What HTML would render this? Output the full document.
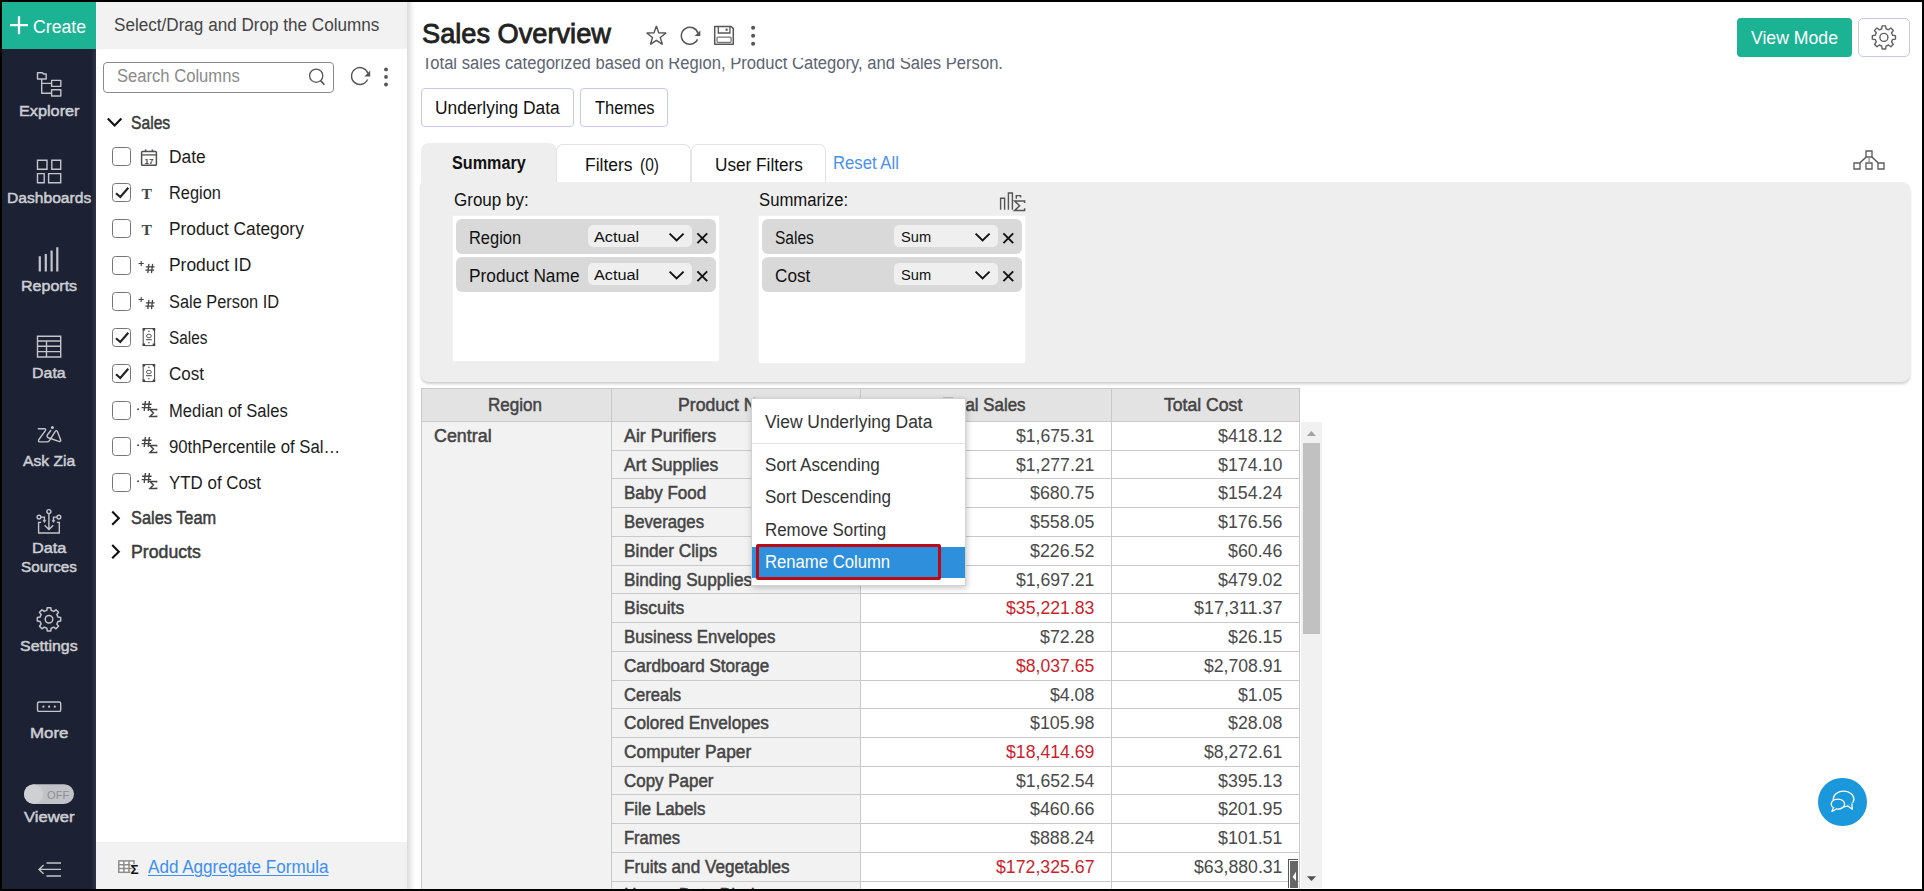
<!DOCTYPE html>
<html lang="en"><head><meta charset="utf-8"><title>Sales Overview</title><style>
html,body{margin:0;padding:0;}
body{width:1924px;height:891px;overflow:hidden;position:relative;background:#fff;font-family:'Liberation Sans',sans-serif;}
div,svg,span.t{position:absolute;}
span.t{white-space:pre;line-height:1;transform-origin:0 50%;}
</style></head>
<body>
<nav><div style="left:2px;top:2px;width:94px;height:887px;background:linear-gradient(to right,#1c2133 0,#1c2133 89px,#2e3547 94px);"></div>
<div style="left:2px;top:2px;width:94px;height:47px;background:#1bb394;"></div>
<svg style="left:2px;top:2px;" width="94" height="47" viewBox="0 0 94 47" fill="none"><path d="M8 23.1H26M17 14.2V32.2" stroke="#fff" stroke-width="2.3"/></svg>
<svg style="left:0;top:0;" width="1924" height="891" viewBox="0 0 1924 891" fill="none"><path d="M37.5 72.8H42.5L43.5 74H46.2V79H37.5Z M51.6 80.4H60.8V86.4H51.6Z M51.6 89.8H60.8V96H51.6Z M41.7 79V93.2H51.6 M41.7 83.4H51.6" stroke="#c4c5cb" stroke-width="1.4" stroke-linejoin="round"/><path d="M37.5 160.2H47V169.2H37.5Z M51.8 160.2H60.7V169.2H51.8Z M37.5 173.6H44.2V182.8H37.5Z M48.6 173.6H60.7V182.8H48.6Z" stroke="#c4c5cb" stroke-width="1.4"/><path d="M39.8 271.5V256.3 M45.8 271.5V254 M51.6 271.5V250.6 M57.3 271.5V247.2" stroke="#c4c5cb" stroke-width="2.2"/><path d="M37.5 336.2H60.7V357H37.5Z M37.5 341H60.7 M37.5 346.2H60.7 M37.5 351.6H60.7 M46.5 341V357" stroke="#c4c5cb" stroke-width="1.4"/><path d="M38.3 428.7H44.2Q46.6 428.7 45.2 430.9L38.9 439.5Q37.6 441.9 40.3 441.9H46.8Q48.6 441.9 49.6 440.3L55.1 431.6Q56.6 429.5 57.6 432L60.5 439.5Q61.4 442.2 58.8 441.3L49 438Q46.2 437 47.5 434.7L50.8 430.5" stroke="#c4c5cb" stroke-width="1.4" stroke-linecap="round" stroke-linejoin="round"/><circle cx="52.4" cy="427.4" r="1.5" fill="#c4c5cb"/><circle cx="48.9" cy="511.6" r="2" stroke="#c4c5cb" stroke-width="1.4"/><circle cx="39" cy="517.1" r="1.9" stroke="#c4c5cb" stroke-width="1.4"/><circle cx="58.9" cy="517.1" r="1.9" stroke="#c4c5cb" stroke-width="1.4"/><path d="M48.9 513.8V529.4 M44.6 525.2L48.9 529.5L53.3 525.2 M41 517.1H44.4V521 M56.9 517.1H53.5V521 M41.2 522.4H38.6V533H59.3V522.4H56.8" stroke="#c4c5cb" stroke-width="1.4"/><path d="M43 520.4L44.4 522.6L45.8 520.4Z M52.1 520.4L53.5 522.6L54.9 520.4Z" fill="#c4c5cb" stroke="#c4c5cb" stroke-width="0.6"/><path d="M46.81 610.36 L47.24 607.63 L50.76 607.63 L51.19 610.36 L53.77 611.43 L56.00 609.80 L58.50 612.30 L56.87 614.53 L57.94 617.11 L60.67 617.54 L60.67 621.06 L57.94 621.49 L56.87 624.07 L58.50 626.30 L56.00 628.80 L53.77 627.17 L51.19 628.24 L50.76 630.97 L47.24 630.97 L46.81 628.24 L44.23 627.17 L42.00 628.80 L39.50 626.30 L41.13 624.07 L40.06 621.49 L37.33 621.06 L37.33 617.54 L40.06 617.11 L41.13 614.53 L39.50 612.30 L42.00 609.80 L44.23 611.43Z" stroke="#c4c5cb" stroke-width="1.5" stroke-linejoin="round"/><circle cx="49" cy="619.3" r="3.8" stroke="#c4c5cb" stroke-width="1.5"/><rect x="37.5" y="702" width="23.2" height="9.4" rx="1.5" stroke="#c4c5cb" stroke-width="1.4"/><circle cx="43.4" cy="706.7" r="1.1" fill="#c4c5cb"/><circle cx="49.1" cy="706.7" r="1.1" fill="#c4c5cb"/><circle cx="54.8" cy="706.7" r="1.1" fill="#c4c5cb"/><rect x="24" y="784.2" width="50" height="19.8" rx="9.9" fill="#c2c3c8"/><circle cx="33.6" cy="794.1" r="9.6" fill="#cfd0d4"/><path d="M46.5 863H61 M39 869.4H61 M46.5 876H61 M43.6 865L39 869.4L43.6 873.8" stroke="#c4c5cb" stroke-width="1.4"/></svg>
<span class="t" style="left:32.80px;top:19px;font-size:17.6px;color:#fff;transform:scaleX(1.0036);">Create</span>
<span class="t" style="left:18.65px;top:103px;font-size:15.4px;color:#cdced3;transform:scaleX(1.0556);-webkit-text-stroke:0.5px #cdced3;">Explorer</span>
<span class="t" style="left:6.90px;top:190px;font-size:15.4px;color:#cdced3;transform:scaleX(1.0145);-webkit-text-stroke:0.5px #cdced3;">Dashboards</span>
<span class="t" style="left:20.95px;top:278px;font-size:15.4px;color:#cdced3;transform:scaleX(1.0410);-webkit-text-stroke:0.5px #cdced3;">Reports</span>
<span class="t" style="left:32.15px;top:365px;font-size:15.4px;color:#cdced3;transform:scaleX(1.0364);-webkit-text-stroke:0.5px #cdced3;">Data</span>
<span class="t" style="left:22.65px;top:453px;font-size:15.4px;color:#cdced3;transform:scaleX(1.0153);-webkit-text-stroke:0.5px #cdced3;">Ask Zia</span>
<span class="t" style="left:31.80px;top:540px;font-size:15.4px;color:#cdced3;transform:scaleX(1.0580);-webkit-text-stroke:0.5px #cdced3;">Data</span>
<span class="t" style="left:20.80px;top:559px;font-size:15.4px;color:#cdced3;transform:scaleX(0.9917);-webkit-text-stroke:0.5px #cdced3;">Sources</span>
<span class="t" style="left:20.05px;top:638px;font-size:15.4px;color:#cdced3;transform:scaleX(1.0373);-webkit-text-stroke:0.5px #cdced3;">Settings</span>
<span class="t" style="left:29.65px;top:725px;font-size:15.4px;color:#cdced3;transform:scaleX(1.0976);-webkit-text-stroke:0.5px #cdced3;">More</span>
<span class="t" style="left:23.65px;top:809px;font-size:15.4px;color:#cdced3;transform:scaleX(1.0799);-webkit-text-stroke:0.5px #cdced3;">Viewer</span>
<span class="t" style="left:46.50px;top:790px;font-size:11.5px;color:#8d8e93;transform:scaleX(0.9652);">OFF</span></nav>
<aside><div style="left:96px;top:2px;width:311px;height:887px;background:#fff;"></div>
<div style="left:96px;top:2px;width:311px;height:47px;background:#f2f2f2;"></div>
<div style="left:103px;top:62px;width:231px;height:31px;border:1px solid #8a8a8a;border-radius:4px;box-sizing:border-box;background:#fff;"></div>
<div style="left:96px;top:842px;width:311px;height:47px;background:#f2f2f2;"></div>
<svg style="left:0;top:0;" width="1924" height="891" viewBox="0 0 1924 891" fill="none"><circle cx="316.2" cy="75.7" r="6.6" stroke="#555" stroke-width="1.3"/><path d="M320.6 80.6L324.4 84.8" stroke="#555" stroke-width="1.6"/><path d="M367.6 79.5A8.4 8.4 0 1 1 368 73.6" stroke="#555" stroke-width="1.4"/><path d="M370.2 70.4V76.4H364.4Z" fill="#555"/><circle cx="386" cy="69.4" r="1.9" fill="#555"/><circle cx="386" cy="76.9" r="1.9" fill="#555"/><circle cx="386" cy="84.5" r="1.9" fill="#555"/><path d="M107.8 118.6L114.6 125.6L121.4 118.6" stroke="#111" stroke-width="2.1"/><path d="M112.2 511.6L118.8 518.2L112.2 524.8" stroke="#111" stroke-width="2.1"/><path d="M112.2 545.1L118.8 551.7L112.2 558.3" stroke="#111" stroke-width="2.1"/><rect x="112.5" y="147.5" width="18" height="18" rx="3" fill="#fff" stroke="#767676"/><rect x="112.5" y="183.5" width="18" height="18" rx="3" fill="#fff" stroke="#767676"/><path d="M116 193.2L120.3 197L128.3 187.8" stroke="#222" stroke-width="2.1"/><rect x="112.5" y="219.5" width="18" height="18" rx="3" fill="#fff" stroke="#767676"/><rect x="112.5" y="256.5" width="18" height="18" rx="3" fill="#fff" stroke="#767676"/><rect x="112.5" y="292.5" width="18" height="18" rx="3" fill="#fff" stroke="#767676"/><rect x="112.5" y="328.5" width="18" height="18" rx="3" fill="#fff" stroke="#767676"/><path d="M116 338.2L120.3 342L128.3 332.8" stroke="#222" stroke-width="2.1"/><rect x="112.5" y="364.5" width="18" height="18" rx="3" fill="#fff" stroke="#767676"/><path d="M116 374.2L120.3 378L128.3 368.8" stroke="#222" stroke-width="2.1"/><rect x="112.5" y="401.5" width="18" height="18" rx="3" fill="#fff" stroke="#767676"/><rect x="112.5" y="437.5" width="18" height="18" rx="3" fill="#fff" stroke="#767676"/><rect x="112.5" y="473.5" width="18" height="18" rx="3" fill="#fff" stroke="#767676"/><rect x="141.6" y="151.6" width="14.8" height="13.6" rx="0.8" stroke="#505050" stroke-width="1.5"/><path d="M141.6 154.9H156.4" stroke="#505050" stroke-width="1.3"/><path d="M145.6 149.4V151.6 M152.4 149.4V151.6" stroke="#505050" stroke-width="1.7"/><text x="149" y="163.5" font-family="Liberation Sans, sans-serif" font-weight="700" font-size="8" fill="#444" text-anchor="middle">17</text><text x="141.6" y="198.9" font-family="Liberation Serif, serif" font-weight="700" font-size="15.6" fill="#444">T</text><text x="141.6" y="235.16" font-family="Liberation Serif, serif" font-weight="700" font-size="15.6" fill="#444">T</text><path d="M138.6 263.5H143.8 M141.2 260.9V266.1" stroke="#444" stroke-width="1.1"/><path d="M148.90 263.9L147.79 273.09999999999997 M152.58 263.9L151.47 273.09999999999997 M145.86 266.94H154.60 M145.40 270.16H154.14" stroke="#444" stroke-width="1.3"/><path d="M138.6 299.5H143.8 M141.2 296.9V302.1" stroke="#444" stroke-width="1.1"/><path d="M148.90 299.9L147.79 309.09999999999997 M152.58 299.9L151.47 309.09999999999997 M145.86 302.94H154.60 M145.40 306.16H154.14" stroke="#444" stroke-width="1.3"/><rect x="143.2" y="328.6" width="11.4" height="17" rx="0.6" stroke="#444" stroke-width="1"/><ellipse cx="148.9" cy="336.0" rx="2.4" ry="1.8" stroke="#444" stroke-width="0.9"/><path d="M146 339.7H151.8" stroke="#444" stroke-width="1"/><circle cx="148.9" cy="331.3" r="0.7" fill="#444"/><circle cx="148.9" cy="342.8" r="0.7" fill="#444"/><path d="M142.6 328.1h2.5v2.5h-2.5Z M152.7 328.1h2.5v2.5h-2.5Z M142.6 343.6h2.5v2.5h-2.5Z M152.7 343.6h2.5v2.5h-2.5Z" fill="#444"/><rect x="143.2" y="364.6" width="11.4" height="17" rx="0.6" stroke="#444" stroke-width="1"/><ellipse cx="148.9" cy="372.0" rx="2.4" ry="1.8" stroke="#444" stroke-width="0.9"/><path d="M146 375.7H151.8" stroke="#444" stroke-width="1"/><circle cx="148.9" cy="367.3" r="0.7" fill="#444"/><circle cx="148.9" cy="378.8" r="0.7" fill="#444"/><path d="M142.6 364.1h2.5v2.5h-2.5Z M152.7 364.1h2.5v2.5h-2.5Z M142.6 379.6h2.5v2.5h-2.5Z M152.7 379.6h2.5v2.5h-2.5Z" fill="#444"/><circle cx="138.1" cy="409.2" r="1" fill="#444"/><path d="M145.40 401L144.20 410.8 M149.40 401L148.20 410.8 M142.10 404.23H151.60 M141.60 407.66H151.10" stroke="#444" stroke-width="1.4"/><path d="M156.6 410.4V409.4H150L153.4 413.0L150 416.5H156.6V415.5" stroke="#444" stroke-width="1.5"/><circle cx="138.1" cy="445.2" r="1" fill="#444"/><path d="M145.40 437L144.20 446.8 M149.40 437L148.20 446.8 M142.10 440.23H151.60 M141.60 443.66H151.10" stroke="#444" stroke-width="1.4"/><path d="M156.6 446.4V445.4H150L153.4 449.0L150 452.5H156.6V451.5" stroke="#444" stroke-width="1.5"/><circle cx="138.1" cy="481.2" r="1" fill="#444"/><path d="M145.40 473L144.20 482.8 M149.40 473L148.20 482.8 M142.10 476.23H151.60 M141.60 479.66H151.10" stroke="#444" stroke-width="1.4"/><path d="M156.6 482.4V481.4H150L153.4 485.0L150 488.5H156.6V487.5" stroke="#444" stroke-width="1.5"/><rect x="118.8" y="860.9" width="15.2" height="11.4" fill="#fff" stroke="#8c8c8c" stroke-width="1.5"/><path d="M118.8 864.7H134 M118.8 868.5H134 M123.9 860.9V872.3 M129 860.9V872.3" stroke="#8c8c8c" stroke-width="1.5"/><text x="130.6" y="873.8" font-family="Liberation Sans, sans-serif" font-weight="700" font-size="13.5" fill="#111" stroke="#f2f2f2" stroke-width="1.6" paint-order="stroke">Σ</text></svg>
<span class="t" style="left:113.50px;top:17px;font-size:17.6px;color:#444;transform:scaleX(0.9724);">Select/Drag and Drop the Columns</span>
<span class="t" style="left:117.30px;top:68px;font-size:17.6px;color:#8a8a8a;transform:scaleX(0.9434);">Search Columns</span>
<span class="t" style="left:131.00px;top:115px;font-size:17.6px;color:#3c3c3c;transform:scaleX(0.8906);-webkit-text-stroke:0.5px #3c3c3c;">Sales</span>
<span class="t" style="left:169.00px;top:149px;font-size:17.6px;color:#1c1c1c;transform:scaleX(0.9900);">Date</span>
<span class="t" style="left:169.00px;top:185px;font-size:17.6px;color:#1c1c1c;transform:scaleX(0.9307);">Region</span>
<span class="t" style="left:169.00px;top:221px;font-size:17.6px;color:#1c1c1c;transform:scaleX(0.9845);">Product Category</span>
<span class="t" style="left:169.00px;top:257px;font-size:17.6px;color:#1c1c1c;transform:scaleX(0.9901);">Product ID</span>
<span class="t" style="left:169.00px;top:294px;font-size:17.6px;color:#1c1c1c;transform:scaleX(0.9295);">Sale Person ID</span>
<span class="t" style="left:169.00px;top:330px;font-size:17.6px;color:#1c1c1c;transform:scaleX(0.8724);">Sales</span>
<span class="t" style="left:169.00px;top:366px;font-size:17.6px;color:#1c1c1c;transform:scaleX(0.9672);">Cost</span>
<span class="t" style="left:169.00px;top:403px;font-size:17.6px;color:#1c1c1c;transform:scaleX(0.9408);">Median of Sales</span>
<span class="t" style="left:169.00px;top:439px;font-size:17.6px;color:#1c1c1c;transform:scaleX(0.9514);">90thPercentile of Sal…</span>
<span class="t" style="left:169.00px;top:475px;font-size:17.6px;color:#1c1c1c;transform:scaleX(0.9602);">YTD of Cost</span>
<span class="t" style="left:131.00px;top:510px;font-size:17.6px;color:#3c3c3c;transform:scaleX(0.9301);-webkit-text-stroke:0.5px #3c3c3c;">Sales Team</span>
<span class="t" style="left:131.00px;top:544px;font-size:17.6px;color:#3c3c3c;transform:scaleX(1.0059);-webkit-text-stroke:0.5px #3c3c3c;">Products</span>
<span class="t" style="left:147.70px;top:859px;font-size:17.6px;color:#3f8ff2;transform:scaleX(0.9713);text-decoration:underline;text-decoration-thickness:1px;text-underline-offset:2px;">Add Aggregate Formula</span></aside>
<main><div style="left:407px;top:2px;width:1515px;height:887px;background:#fff linear-gradient(to right,#dadada 0,#e4e4e4 2px,#efefef 4px,#f9f9f9 6.5px,#fff 9px) no-repeat;background-size:10px 100%;"></div>
<div style="left:415px;top:58px;width:700px;height:30px;overflow:hidden;"><span class="t" style="left:7.30px;top:-3px;font-size:17.6px;color:#5d6472;transform:scaleX(0.9434);">Total sales categorized based on Region, Product Category, and Sales Person.</span></div>
<div style="left:421px;top:88px;width:153px;height:39px;border:1px solid #c3cbe8;border-radius:4px;box-sizing:border-box;background:#fff;"></div>
<div style="left:580px;top:88px;width:88px;height:39px;border:1px solid #c3cbe8;border-radius:4px;box-sizing:border-box;background:#fff;"></div>
<div style="left:1737px;top:18px;width:115px;height:39px;background:#1bb394;border-radius:4px;"></div>
<div style="left:1858px;top:18px;width:52px;height:39px;border:1px solid #c3cbe8;border-radius:4px;box-sizing:border-box;background:#fff;border-radius:5px;"></div>
<div style="left:421px;top:182px;width:1489px;height:200px;background:#eee;border-radius:0 8px 8px 8px;box-shadow:0 2px 3px rgba(0,0,0,.2);"></div>
<div style="left:421px;top:143px;width:135.5px;height:40px;background:#eee;border-radius:8px 8px 0 0;"></div>
<div style="left:556px;top:144px;width:135px;height:38px;background:#fff;border:1px solid #e4e4e4;border-bottom:none;border-radius:7px 7px 0 0;box-sizing:border-box;"></div>
<div style="left:691px;top:144px;width:135px;height:38px;background:#fff;border:1px solid #e4e4e4;border-bottom:none;border-radius:7px 7px 0 0;box-sizing:border-box;"></div>
<div style="left:452px;top:215px;width:268px;height:147px;background:#fff;border:1px solid #f1f1f1;box-sizing:border-box;"></div>
<div style="left:758px;top:215px;width:268px;height:148.5px;background:#fff;border:1px solid #f1f1f1;box-sizing:border-box;"></div>
<div style="left:456px;top:219.3px;width:260px;height:34.6px;background:#d9d9d9;border-radius:6px;"></div>
<div style="left:588px;top:225px;width:104px;height:22.3px;background:#efefef;border-radius:5px;"></div>
<svg style="left:668px;top:231.3px;" width="42" height="16" viewBox="0 0 42 16" fill="none"><path d="M1.6 2.6L8.6 9.4L15.6 2.6" stroke="#111" stroke-width="1.9"/><path d="M29.4 2.4L39.2 12.2M39.2 2.4L29.4 12.2" stroke="#111" stroke-width="1.9"/></svg>
<div style="left:456px;top:257.3px;width:260px;height:34.6px;background:#d9d9d9;border-radius:6px;"></div>
<div style="left:588px;top:263px;width:104px;height:22.3px;background:#efefef;border-radius:5px;"></div>
<svg style="left:668px;top:269.3px;" width="42" height="16" viewBox="0 0 42 16" fill="none"><path d="M1.6 2.6L8.6 9.4L15.6 2.6" stroke="#111" stroke-width="1.9"/><path d="M29.4 2.4L39.2 12.2M39.2 2.4L29.4 12.2" stroke="#111" stroke-width="1.9"/></svg>
<div style="left:762px;top:219.3px;width:260px;height:34.6px;background:#d9d9d9;border-radius:6px;"></div>
<div style="left:894px;top:225px;width:104px;height:22.3px;background:#efefef;border-radius:5px;"></div>
<svg style="left:974px;top:231.3px;" width="42" height="16" viewBox="0 0 42 16" fill="none"><path d="M1.6 2.6L8.6 9.4L15.6 2.6" stroke="#111" stroke-width="1.9"/><path d="M29.4 2.4L39.2 12.2M39.2 2.4L29.4 12.2" stroke="#111" stroke-width="1.9"/></svg>
<div style="left:762px;top:257.3px;width:260px;height:34.6px;background:#d9d9d9;border-radius:6px;"></div>
<div style="left:894px;top:263px;width:104px;height:22.3px;background:#efefef;border-radius:5px;"></div>
<svg style="left:974px;top:269.3px;" width="42" height="16" viewBox="0 0 42 16" fill="none"><path d="M1.6 2.6L8.6 9.4L15.6 2.6" stroke="#111" stroke-width="1.9"/><path d="M29.4 2.4L39.2 12.2M39.2 2.4L29.4 12.2" stroke="#111" stroke-width="1.9"/></svg>
<svg style="left:0;top:0;" width="1924" height="891" viewBox="0 0 1924 891" fill="none"><path d="M656.40 26.00 L658.81 32.88 L666.10 33.05 L660.30 37.47 L662.40 44.45 L656.40 40.30 L650.40 44.45 L652.50 37.47 L646.70 33.05 L653.99 32.88Z" stroke="#555" stroke-width="1.4" stroke-linejoin="miter" stroke-miterlimit="2"/><path d="M697.5 39.4A8.5 8.5 0 1 1 698 33.4" stroke="#555" stroke-width="1.5"/><path d="M700.3 30.4V36.1H694.6Z" fill="#555"/><path d="M714.7 26.5H731.2L733.3 28.6V44.3H714.7Z" stroke="#555" stroke-width="1.5" stroke-linejoin="round"/><path d="M718.3 26.5V33H729.9V26.5" stroke="#555" stroke-width="1.3"/><rect x="717" y="37.1" width="14.1" height="5.2" rx="1" stroke="#777" stroke-width="1.3"/><rect x="725.6" y="28.6" width="2" height="2.2" fill="#555"/><circle cx="753.1" cy="27.7" r="2" fill="#555"/><circle cx="753.1" cy="35.7" r="2" fill="#555"/><circle cx="753.1" cy="43.8" r="2" fill="#555"/><path d="M1881.78 28.76 L1882.15 25.83 L1885.65 25.83 L1886.02 28.76 L1888.52 29.79 L1890.84 27.98 L1893.32 30.46 L1891.51 32.78 L1892.54 35.28 L1895.47 35.65 L1895.47 39.15 L1892.54 39.52 L1891.51 42.02 L1893.32 44.34 L1890.84 46.82 L1888.52 45.01 L1886.02 46.04 L1885.65 48.97 L1882.15 48.97 L1881.78 46.04 L1879.28 45.01 L1876.96 46.82 L1874.48 44.34 L1876.29 42.02 L1875.26 39.52 L1872.33 39.15 L1872.33 35.65 L1875.26 35.28 L1876.29 32.78 L1874.48 30.46 L1876.96 27.98 L1879.28 29.79Z" stroke="#606060" stroke-width="1.4" stroke-linejoin="round"/><circle cx="1883.9" cy="37.4" r="4.0" stroke="#606060" stroke-width="1.4"/><path d="M1866 151H1872V157H1866Z M1854 163H1860V169H1854Z M1866 163H1872V169H1866Z M1878 163H1884V169H1878Z" stroke="#5c5c5c" stroke-width="1.35"/><path d="M1866.2 157L1860 162.8 M1871.9 157L1878 162.8" stroke="#585858" stroke-width="1.5"/><path d="M1869.05 157V162.6" stroke="#8a8a8a" stroke-width="1.3"/><path d="M1000.6 209.8V198.3H1004.6V209.8 M1008.4 209.8V193H1012.4V209.8 M1016.3 198.8V195.6H1020.6V197.4" stroke="#555" stroke-width="1.4"/><path d="M1024.6 203V200.9H1014.6L1019.6 205.8L1014.6 210.6H1024.6V208.2" stroke="#555" stroke-width="1.5" stroke-linejoin="miter"/></svg>
<span class="t" style="left:422.20px;top:20px;font-size:27.5px;color:#222;transform:scaleX(0.9888);-webkit-text-stroke:0.85px #222;">Sales Overview</span>
<span class="t" style="left:435.40px;top:100px;font-size:17.6px;color:#111;transform:scaleX(0.9885);">Underlying Data</span>
<span class="t" style="left:594.70px;top:100px;font-size:17.6px;color:#111;transform:scaleX(0.9377);">Themes</span>
<span class="t" style="left:1751.00px;top:30px;font-size:17.6px;color:#fff;transform:scaleX(1.0032);">View Mode</span>
<span class="t" style="left:451.60px;top:155px;font-size:17.6px;color:#111;transform:scaleX(0.9191);font-weight:700;">Summary</span>
<span class="t" style="left:585.00px;top:157px;font-size:17.6px;color:#111;transform:scaleX(0.9936);">Filters</span>
<span class="t" style="left:640.40px;top:157px;font-size:17.6px;color:#111;transform:scaleX(0.8784);">(0)</span>
<span class="t" style="left:714.60px;top:157px;font-size:17.6px;color:#111;transform:scaleX(0.9773);">User Filters</span>
<span class="t" style="left:833.30px;top:155px;font-size:17.6px;color:#4b8ff0;transform:scaleX(0.9491);">Reset All</span>
<span class="t" style="left:453.70px;top:192px;font-size:17.6px;color:#111;transform:scaleX(0.9668);">Group by:</span>
<span class="t" style="left:758.80px;top:192px;font-size:17.6px;color:#111;transform:scaleX(0.9493);">Summarize:</span>
<span class="t" style="left:469.00px;top:230px;font-size:17.6px;color:#111;transform:scaleX(0.9343);">Region</span>
<span class="t" style="left:468.50px;top:268px;font-size:17.6px;color:#111;transform:scaleX(0.9826);">Product Name</span>
<span class="t" style="left:774.80px;top:230px;font-size:17.6px;color:#111;transform:scaleX(0.8838);">Sales</span>
<span class="t" style="left:774.80px;top:268px;font-size:17.6px;color:#111;transform:scaleX(0.9755);">Cost</span>
<span class="t" style="left:594.30px;top:229px;font-size:15.4px;color:#111;transform:scaleX(1.0565);">Actual</span>
<span class="t" style="left:594.30px;top:267px;font-size:15.4px;color:#111;transform:scaleX(1.0565);">Actual</span>
<span class="t" style="left:900.60px;top:229px;font-size:15.4px;color:#111;transform:scaleX(0.9508);">Sum</span>
<span class="t" style="left:900.60px;top:267px;font-size:15.4px;color:#111;transform:scaleX(0.9508);">Sum</span></main>
<section><div style="left:421px;top:388px;width:879px;height:34px;background:#e3e3e3;"></div>
<div style="left:421px;top:422px;width:440px;height:467px;background:#f2f2f2;"></div>
<div style="left:421px;top:388px;width:879px;height:1px;background:#c9c9c9;"></div>
<div style="left:421px;top:421px;width:879px;height:1px;background:#c9c9c9;"></div>
<div style="left:611px;top:450px;width:689px;height:1px;background:#c9c9c9;"></div>
<div style="left:611px;top:478px;width:689px;height:1px;background:#c9c9c9;"></div>
<div style="left:611px;top:507px;width:689px;height:1px;background:#c9c9c9;"></div>
<div style="left:611px;top:536px;width:689px;height:1px;background:#c9c9c9;"></div>
<div style="left:611px;top:565px;width:689px;height:1px;background:#c9c9c9;"></div>
<div style="left:611px;top:593px;width:689px;height:1px;background:#c9c9c9;"></div>
<div style="left:611px;top:622px;width:689px;height:1px;background:#c9c9c9;"></div>
<div style="left:611px;top:651px;width:689px;height:1px;background:#c9c9c9;"></div>
<div style="left:611px;top:680px;width:689px;height:1px;background:#c9c9c9;"></div>
<div style="left:611px;top:708px;width:689px;height:1px;background:#c9c9c9;"></div>
<div style="left:611px;top:737px;width:689px;height:1px;background:#c9c9c9;"></div>
<div style="left:611px;top:766px;width:689px;height:1px;background:#c9c9c9;"></div>
<div style="left:611px;top:794px;width:689px;height:1px;background:#c9c9c9;"></div>
<div style="left:611px;top:823px;width:689px;height:1px;background:#c9c9c9;"></div>
<div style="left:611px;top:852px;width:689px;height:1px;background:#c9c9c9;"></div>
<div style="left:611px;top:881px;width:689px;height:1px;background:#c9c9c9;"></div>
<div style="left:421px;top:388px;width:1px;height:501px;background:#c9c9c9;"></div>
<div style="left:611px;top:388px;width:1px;height:501px;background:#c9c9c9;"></div>
<div style="left:860px;top:388px;width:1px;height:501px;background:#c9c9c9;"></div>
<div style="left:1111px;top:388px;width:1px;height:501px;background:#c9c9c9;"></div>
<div style="left:1299px;top:388px;width:1px;height:501px;background:#c9c9c9;"></div>
<div style="left:1301px;top:422px;width:21px;height:466px;background:#f1f1f1;"></div>
<div style="left:1303px;top:443px;width:17px;height:191px;background:#c1c1c1;"></div>
<svg style="left:1301px;top:422px;" width="21" height="466" viewBox="0 0 21 466" fill="none"><path d="M5.9 14L10.4 9L15 14Z" fill="#a3a3a3"/><path d="M5.9 454.2L10.5 459L15.1 454.2Z" fill="#505050"/></svg>
<div style="left:1288px;top:859px;width:10px;height:29px;border-left:1px solid #555;border-top:1px solid #555;background:#fff;box-sizing:border-box;"></div>
<div style="left:1290px;top:861px;width:8px;height:27px;background:#666;"></div>
<svg style="left:1288px;top:859px;" width="10" height="29" viewBox="0 0 10 29" fill="none"><path d="M8 12.8L4.6 17.9L8 22Z" fill="#fff"/></svg>
<span class="t" style="left:487.84px;top:397px;font-size:17.6px;color:#444;transform:scaleX(0.9669);-webkit-text-stroke:0.5px #444;">Region</span>
<span class="t" style="left:678.22px;top:397px;font-size:17.6px;color:#444;transform:scaleX(1.0028);-webkit-text-stroke:0.5px #444;">Product Name</span>
<span class="t" style="left:942.97px;top:397px;font-size:17.6px;color:#444;transform:scaleX(0.9581);-webkit-text-stroke:0.5px #444;">Total Sales</span>
<span class="t" style="left:1163.84px;top:397px;font-size:17.6px;color:#444;transform:scaleX(1.0012);-webkit-text-stroke:0.5px #444;">Total Cost</span>
<span class="t" style="left:433.70px;top:428px;font-size:17.6px;color:#444;transform:scaleX(1.0155);-webkit-text-stroke:0.5px #444;">Central</span>
<span class="t" style="left:623.60px;top:428px;font-size:17.6px;color:#444;transform:scaleX(1.0132);-webkit-text-stroke:0.5px #444;">Air Purifiers</span>
<span class="t" style="left:1016.32px;top:428px;font-size:17.6px;color:#4a4a4a;transform:scaleX(1.0013);">$1,675.31</span>
<span class="t" style="left:1218.29px;top:428px;font-size:17.6px;color:#4a4a4a;transform:scaleX(1.0126);">$418.12</span>
<span class="t" style="left:623.60px;top:457px;font-size:17.6px;color:#444;transform:scaleX(0.9928);-webkit-text-stroke:0.5px #444;">Art Supplies</span>
<span class="t" style="left:1016.32px;top:457px;font-size:17.6px;color:#4a4a4a;transform:scaleX(1.0013);">$1,277.21</span>
<span class="t" style="left:1218.29px;top:457px;font-size:17.6px;color:#4a4a4a;transform:scaleX(1.0126);">$174.10</span>
<span class="t" style="left:623.60px;top:485px;font-size:17.6px;color:#444;transform:scaleX(0.9660);-webkit-text-stroke:0.5px #444;">Baby Food</span>
<span class="t" style="left:1030.29px;top:485px;font-size:17.6px;color:#4a4a4a;transform:scaleX(1.0126);">$680.75</span>
<span class="t" style="left:1218.29px;top:485px;font-size:17.6px;color:#4a4a4a;transform:scaleX(1.0126);">$154.24</span>
<span class="t" style="left:623.60px;top:514px;font-size:17.6px;color:#444;transform:scaleX(0.9517);-webkit-text-stroke:0.5px #444;">Beverages</span>
<span class="t" style="left:1030.29px;top:514px;font-size:17.6px;color:#4a4a4a;transform:scaleX(1.0126);">$558.05</span>
<span class="t" style="left:1218.29px;top:514px;font-size:17.6px;color:#4a4a4a;transform:scaleX(1.0126);">$176.56</span>
<span class="t" style="left:623.60px;top:543px;font-size:17.6px;color:#444;transform:scaleX(0.9829);-webkit-text-stroke:0.5px #444;">Binder Clips</span>
<span class="t" style="left:1030.29px;top:543px;font-size:17.6px;color:#4a4a4a;transform:scaleX(1.0126);">$226.52</span>
<span class="t" style="left:1228.34px;top:543px;font-size:17.6px;color:#4a4a4a;transform:scaleX(1.0102);">$60.46</span>
<span class="t" style="left:623.60px;top:572px;font-size:17.6px;color:#444;transform:scaleX(0.9774);-webkit-text-stroke:0.5px #444;">Binding Supplies</span>
<span class="t" style="left:1016.32px;top:572px;font-size:17.6px;color:#4a4a4a;transform:scaleX(1.0013);">$1,697.21</span>
<span class="t" style="left:1218.29px;top:572px;font-size:17.6px;color:#4a4a4a;transform:scaleX(1.0126);">$479.02</span>
<span class="t" style="left:623.60px;top:600px;font-size:17.6px;color:#444;transform:scaleX(0.9920);-webkit-text-stroke:0.5px #444;">Biscuits</span>
<span class="t" style="left:1006.25px;top:600px;font-size:17.6px;color:#cc1f2e;transform:scaleX(1.0044);">$35,221.83</span>
<span class="t" style="left:1194.25px;top:600px;font-size:17.6px;color:#4a4a4a;transform:scaleX(1.0196);">$17,311.37</span>
<span class="t" style="left:623.60px;top:629px;font-size:17.6px;color:#444;transform:scaleX(0.9549);-webkit-text-stroke:0.5px #444;">Business Envelopes</span>
<span class="t" style="left:1040.34px;top:629px;font-size:17.6px;color:#4a4a4a;transform:scaleX(1.0102);">$72.28</span>
<span class="t" style="left:1228.34px;top:629px;font-size:17.6px;color:#4a4a4a;transform:scaleX(1.0102);">$26.15</span>
<span class="t" style="left:623.60px;top:658px;font-size:17.6px;color:#444;transform:scaleX(0.9703);-webkit-text-stroke:0.5px #444;">Cardboard Storage</span>
<span class="t" style="left:1016.32px;top:658px;font-size:17.6px;color:#cc1f2e;transform:scaleX(1.0013);">$8,037.65</span>
<span class="t" style="left:1204.32px;top:658px;font-size:17.6px;color:#4a4a4a;transform:scaleX(1.0013);">$2,708.91</span>
<span class="t" style="left:623.60px;top:687px;font-size:17.6px;color:#444;transform:scaleX(0.9430);-webkit-text-stroke:0.5px #444;">Cereals</span>
<span class="t" style="left:1050.39px;top:687px;font-size:17.6px;color:#4a4a4a;transform:scaleX(1.0063);">$4.08</span>
<span class="t" style="left:1238.39px;top:687px;font-size:17.6px;color:#4a4a4a;transform:scaleX(1.0063);">$1.05</span>
<span class="t" style="left:623.60px;top:715px;font-size:17.6px;color:#444;transform:scaleX(0.9743);-webkit-text-stroke:0.5px #444;">Colored Envelopes</span>
<span class="t" style="left:1030.29px;top:715px;font-size:17.6px;color:#4a4a4a;transform:scaleX(1.0126);">$105.98</span>
<span class="t" style="left:1228.34px;top:715px;font-size:17.6px;color:#4a4a4a;transform:scaleX(1.0102);">$28.08</span>
<span class="t" style="left:623.60px;top:744px;font-size:17.6px;color:#444;transform:scaleX(0.9858);-webkit-text-stroke:0.5px #444;">Computer Paper</span>
<span class="t" style="left:1006.25px;top:744px;font-size:17.6px;color:#cc1f2e;transform:scaleX(1.0044);">$18,414.69</span>
<span class="t" style="left:1204.32px;top:744px;font-size:17.6px;color:#4a4a4a;transform:scaleX(1.0013);">$8,272.61</span>
<span class="t" style="left:623.60px;top:773px;font-size:17.6px;color:#444;transform:scaleX(0.9627);-webkit-text-stroke:0.5px #444;">Copy Paper</span>
<span class="t" style="left:1016.32px;top:773px;font-size:17.6px;color:#4a4a4a;transform:scaleX(1.0013);">$1,652.54</span>
<span class="t" style="left:1218.29px;top:773px;font-size:17.6px;color:#4a4a4a;transform:scaleX(1.0126);">$395.13</span>
<span class="t" style="left:623.60px;top:801px;font-size:17.6px;color:#444;transform:scaleX(0.9568);-webkit-text-stroke:0.5px #444;">File Labels</span>
<span class="t" style="left:1030.29px;top:801px;font-size:17.6px;color:#4a4a4a;transform:scaleX(1.0126);">$460.66</span>
<span class="t" style="left:1218.29px;top:801px;font-size:17.6px;color:#4a4a4a;transform:scaleX(1.0126);">$201.95</span>
<span class="t" style="left:623.60px;top:830px;font-size:17.6px;color:#444;transform:scaleX(0.9400);-webkit-text-stroke:0.5px #444;">Frames</span>
<span class="t" style="left:1030.29px;top:830px;font-size:17.6px;color:#4a4a4a;transform:scaleX(1.0126);">$888.24</span>
<span class="t" style="left:1218.29px;top:830px;font-size:17.6px;color:#4a4a4a;transform:scaleX(1.0126);">$101.51</span>
<span class="t" style="left:623.60px;top:859px;font-size:17.6px;color:#444;transform:scaleX(0.9735);-webkit-text-stroke:0.5px #444;">Fruits and Vegetables</span>
<span class="t" style="left:996.20px;top:859px;font-size:17.6px;color:#cc1f2e;transform:scaleX(1.0067);">$172,325.67</span>
<span class="t" style="left:1194.25px;top:859px;font-size:17.6px;color:#4a4a4a;transform:scaleX(1.0044);">$63,880.31</span>
<span class="t" style="left:623.60px;top:887px;font-size:17.6px;color:#444;transform:scaleX(0.9979);-webkit-text-stroke:0.5px #444;">Heavy Duty Binders</span>
<span class="t" style="left:1016.32px;top:888px;font-size:17.6px;color:#4a4a4a;transform:scaleX(1.0013);">$1,889.27</span>
<span class="t" style="left:1218.29px;top:888px;font-size:17.6px;color:#4a4a4a;transform:scaleX(1.0126);">$517.36</span></section>
<div class="menu"><div style="left:751px;top:398px;width:215px;height:188px;background:#fff;border:1px solid #d2d2d2;box-sizing:border-box;box-shadow:1px 2px 6px rgba(0,0,0,.22);"></div>
<div style="left:752px;top:443px;width:213px;height:1px;background:#e6e6e6;"></div>
<div style="left:752px;top:546.5px;width:213px;height:31.5px;background:#2e8fdd;"></div>
<div style="left:755.5px;top:543.5px;width:185px;height:36px;border:3px solid #bb0a14;box-sizing:border-box;border-radius:2px;"></div>
<span class="t" style="left:764.80px;top:414px;font-size:17.6px;color:#333;transform:scaleX(0.9914);">View Underlying Data</span>
<span class="t" style="left:764.80px;top:457px;font-size:17.6px;color:#333;transform:scaleX(0.9704);">Sort Ascending</span>
<span class="t" style="left:764.80px;top:489px;font-size:17.6px;color:#333;transform:scaleX(0.9685);">Sort Descending</span>
<span class="t" style="left:764.80px;top:522px;font-size:17.6px;color:#333;transform:scaleX(0.9593);">Remove Sorting</span>
<span class="t" style="left:764.80px;top:554px;font-size:17.6px;color:#fff;transform:scaleX(0.9477);">Rename Column</span></div>
<div style="left:1818.2px;top:777.5px;width:48.6px;height:48.6px;background:#1b97dc;border-radius:50%;"></div>
<svg style="left:0;top:0;" width="1924" height="891" viewBox="0 0 1924 891" fill="none"><ellipse cx="1843.6" cy="799" rx="10.3" ry="7.8" fill="#1b97dc" stroke="#fff" stroke-width="1.3" stroke-linejoin="round" stroke-linecap="round"/><path d="M1847.6 805.4L1852.6 802.6L1852.3 809.2Z" fill="#1b97dc"/><path d="M1848.2 806.2L1852.3 809.2L1851.9 804.2" stroke="#fff" stroke-width="1.3" stroke-linejoin="round" stroke-linecap="round"/><ellipse cx="1837.9" cy="804.1" rx="6.7" ry="5" fill="#1b97dc" stroke="#fff" stroke-width="1.3" stroke-linejoin="round" stroke-linecap="round"/><path d="M1832.8 806.6L1837.2 809.3L1831.9 811.4Z" fill="#1b97dc"/><path d="M1833.3 807.6L1831.9 811.4L1836.4 809" stroke="#fff" stroke-width="1.3" stroke-linejoin="round" stroke-linecap="round"/></svg>
<div style="left:0px;top:0px;width:1924px;height:891px;border:2px solid #000;box-sizing:border-box;z-index:50;"></div>
</body></html>
